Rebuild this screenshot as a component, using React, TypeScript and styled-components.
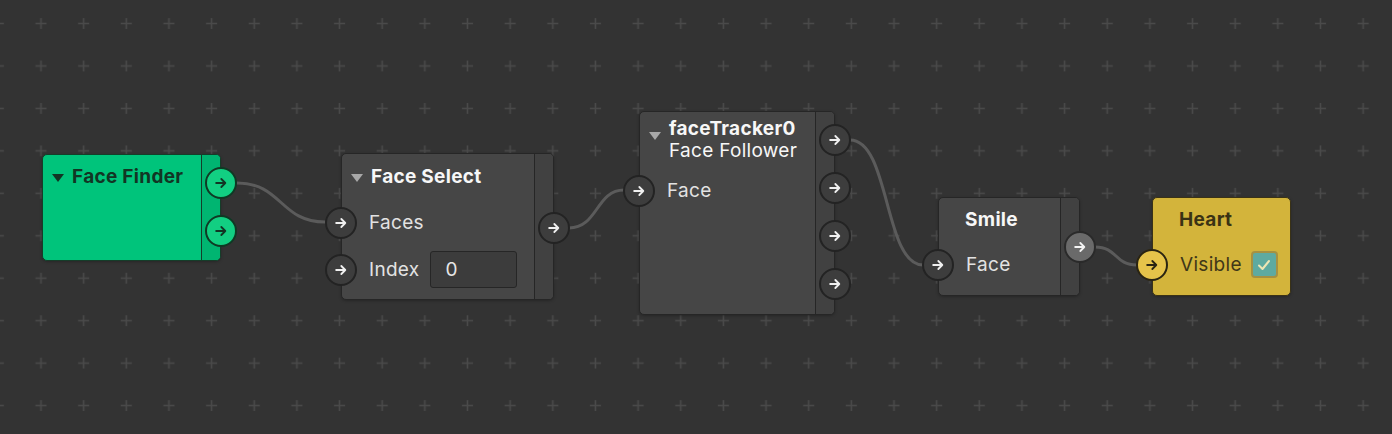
import styled, { createGlobalStyle } from 'styled-components'

type Tone = 'dark' | 'green' | 'yellow'

const tones = {
  dark: { bg: '#464646', side: '#414141', border: '#262626', title: '#f7f7f7', text: '#e2e2e2', caret: '#a8a8a8' },
  green: { bg: '#00c47b', side: '#00b571', border: '#153d29', title: '#123524', text: '#123524', caret: '#123524' },
  yellow: { bg: '#d3b43b', side: '#c8aa36', border: '#3a3216', title: '#3a3214', text: '#3f3718', caret: '#3a3214' },
}

const ports = {
  dark: { bg: '#3d3d3d', border: '#232323', arrow: '#f0f0f0' },
  light: { bg: '#6a6a6a', border: '#2a2a2a', arrow: '#f4f4f4' },
  green: { bg: '#12cf82', border: '#0f3a24', arrow: '#123524' },
  yellow: { bg: '#e6c34a', border: '#2a2412', arrow: '#2a2412' },
}
type PortTone = keyof typeof ports

const GlobalStyle = createGlobalStyle`
  body {
    margin: 0;
    background: #333333;
    font-family: Inter, "Noto Sans", "Liberation Sans", sans-serif;
  }
`

const Canvas = styled.div`
  position: relative;
  width: 1392px;
  height: 434px;
  overflow: hidden;
  background: #333333;
`

const Backdrop = styled.svg`
  position: absolute;
  inset: 0;
`

const NodeBox = styled.div<{ $tone: Tone; $x: number; $y: number; $w: number; $h: number }>`
  position: absolute;
  left: ${p => p.$x}px;
  top: ${p => p.$y}px;
  width: ${p => p.$w}px;
  height: ${p => p.$h}px;
  box-sizing: border-box;
  display: flex;
  border: 1px solid ${p => tones[p.$tone].border};
  border-radius: 5px;
  background: ${p => tones[p.$tone].bg};
  box-shadow: 0 1px 3px rgba(0, 0, 0, 0.25);
`

const Main = styled.div<{ $padTop: number }>`
  flex: 1;
  min-width: 0;
  display: flex;
  flex-direction: column;
  padding-top: ${p => p.$padTop}px;
`

const Side = styled.div<{ $tone: Tone; $padTop: number }>`
  width: 18px;
  display: flex;
  flex-direction: column;
  align-items: flex-end;
  gap: 16px;
  padding-top: ${p => p.$padTop}px;
  border-left: 1px solid ${p => tones[p.$tone].border};
  border-radius: 0 4px 4px 0;
  background: ${p => tones[p.$tone].side};
`

const Title = styled.div<{ $indent: number }>`
  display: flex;
  align-items: flex-start;
  padding-left: ${p => p.$indent}px;
`

const Caret = styled.span<{ $tone: Tone; $drop: number }>`
  width: 0;
  height: 0;
  margin: ${p => p.$drop}px 8px 0 0;
  border-left: 6px solid transparent;
  border-right: 6px solid transparent;
  border-top: 8px solid ${p => tones[p.$tone].caret};
`

const TitleText = styled.div<{ $tone: Tone }>`
  display: flex;
  flex-direction: column;
  font-size: 19px;
  line-height: 22px;
  letter-spacing: 0.3px;
  color: ${p => tones[p.$tone].title};

  b {
    font-weight: 700;
  }

  span {
    font-weight: 400;
  }
`

const Rows = styled.div<{ $gap: number }>`
  display: flex;
  flex-direction: column;
  margin-top: ${p => p.$gap}px;
`

const Row = styled.div<{ $tone: Tone }>`
  height: 47px;
  display: flex;
  align-items: center;
  gap: 12px;
  font-size: 19px;
  letter-spacing: 0.3px;
  color: ${p => tones[p.$tone].text};
`

const PortDot = styled.div<{ $tone: PortTone; $side: 'in' | 'out' }>`
  flex: none;
  width: 32px;
  height: 32px;
  box-sizing: border-box;
  display: flex;
  align-items: center;
  justify-content: center;
  border: 2px solid ${p => ports[p.$tone].border};
  border-radius: 50%;
  background: ${p => ports[p.$tone].bg};
  color: ${p => ports[p.$tone].arrow};
  margin-left: ${p => (p.$side === 'in' ? '-17px' : '0')};
  margin-right: ${p => (p.$side === 'out' ? '-17px' : '0')};
`

const NumberField = styled.div`
  width: 87px;
  height: 37px;
  box-sizing: border-box;
  display: flex;
  align-items: center;
  padding-left: 14px;
  margin-left: -1px;
  border: 1px solid #262626;
  border-radius: 3px;
  background: #3c3c3c;
  color: #e6e6e6;
  font-size: 19px;
`

const Check = styled.div`
  width: 27px;
  height: 27px;
  box-sizing: border-box;
  display: flex;
  align-items: center;
  justify-content: center;
  margin-left: -3px;
  border: 2px solid #a59142;
  border-radius: 4px;
  background: #5eaaa0;
  color: #eee6b4;
`

function Arrow() {
  return (
    <svg width="14" height="14" viewBox="0 0 13 13" fill="none" stroke="currentColor" strokeWidth="1.7" strokeLinecap="round" strokeLinejoin="round">
      <path d="M2 6.5h8.5M6.8 2.8 10.5 6.5 6.8 10.2" />
    </svg>
  )
}

function Port({ tone = 'dark', side }: { tone?: PortTone; side: 'in' | 'out' }) {
  return (
    <PortDot $tone={tone} $side={side}>
      <Arrow />
    </PortDot>
  )
}

interface NodeProps {
  x: number
  y: number
  w: number
  h: number
  tone?: Tone
  title: string
  subtitle?: string
  caret?: boolean
  padTop: number
  rowGap?: number
  outputs?: number
  outTop?: number
  outTone?: PortTone
  children?: React.ReactNode
}

function Node({ x, y, w, h, tone = 'dark', title, subtitle, caret = true, padTop, rowGap = 11, outputs = 0, outTop = 12, outTone = 'dark', children }: NodeProps) {
  return (
    <NodeBox $tone={tone} $x={x} $y={y} $w={w} $h={h}>
      <Main $padTop={padTop}>
        <Title $indent={caret ? 9 : 26}>
          {caret && <Caret $tone={tone} $drop={subtitle ? 14 : 8} />}
          <TitleText $tone={tone}>
            <b>{title}</b>
            {subtitle && <span>{subtitle}</span>}
          </TitleText>
        </Title>
        {children && <Rows $gap={rowGap}>{children}</Rows>}
      </Main>
      {outputs > 0 && (
        <Side $tone={tone} $padTop={outTop}>
          {Array.from({ length: outputs }, (_, i) => (
            <Port key={i} side="out" tone={outTone} />
          ))}
        </Side>
      )}
    </NodeBox>
  )
}

const wires = [
  'M237 183 C 282 183, 280 222, 325 222',
  'M569 228 C 598 228, 596 190, 624 190',
  'M850 140 C 890 140, 884 265, 923 265',
  'M1095 247 C 1118 247, 1114 265, 1137 265',
]

export default function App() {
  return (
    <Canvas>
      <GlobalStyle />
      <Backdrop width="1392" height="434">
        <defs>
          <pattern id="dots" width="42.65" height="42.45" x="19.7" y="2.3" patternUnits="userSpaceOnUse">
            <path d="M15.8 21.2h11M21.3 15.7v11" stroke="#4a4a4a" strokeWidth="1.5" />
          </pattern>
        </defs>
        <rect width="1392" height="434" fill="url(#dots)" />
        {wires.map(d => (
          <path key={d} d={d} fill="none" stroke="#5b5b5b" strokeWidth="3" />
        ))}
      </Backdrop>

      <Node x={42} y={154} w={179} h={107} tone="green" title="Face Finder" padTop={11} outputs={2} outTop={12} outTone="green" />

      <Node x={341} y={153} w={213} h={147} title="Face Select" padTop={12} outputs={1} outTop={58}>
        <Row $tone="dark">
          <Port side="in" />
          Faces
        </Row>
        <Row $tone="dark">
          <Port side="in" />
          Index
          <NumberField>0</NumberField>
        </Row>
      </Node>

      <Node x={639} y={111} w={196} h={204} title="faceTracker0" subtitle="Face Follower" padTop={6} rowGap={5} outputs={4} outTop={12}>
        <Row $tone="dark">
          <Port side="in" />
          Face
        </Row>
      </Node>

      <Node x={938} y={197} w={142} h={99} title="Smile" caret={false} padTop={11} rowGap={10} outputs={1} outTop={33} outTone="light">
        <Row $tone="dark">
          <Port side="in" />
          Face
        </Row>
      </Node>

      <Node x={1152} y={197} w={139} h={99} tone="yellow" title="Heart" caret={false} padTop={11} rowGap={10}>
        <Row $tone="yellow">
          <Port side="in" tone="yellow" />
          Visible
          <Check>
            <svg width="16" height="16" viewBox="0 0 16 16" fill="none" stroke="currentColor" strokeWidth="2" strokeLinecap="round" strokeLinejoin="round">
              <path d="M3 8.5 6.5 12 13 4" />
            </svg>
          </Check>
        </Row>
      </Node>
    </Canvas>
  )
}
